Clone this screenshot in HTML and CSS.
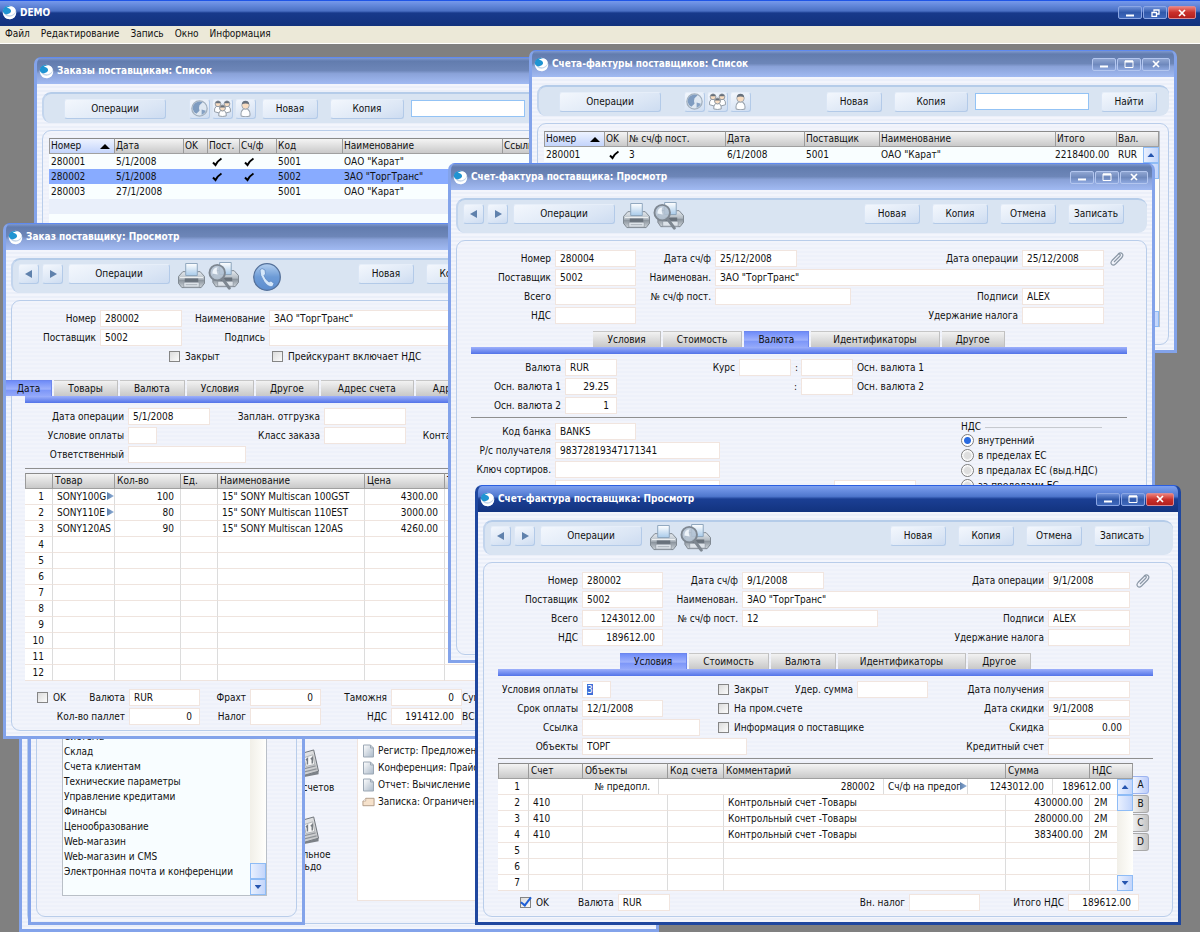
FILE: index.html
```
<!DOCTYPE html>
<html lang="ru">
<head>
    <meta charset="UTF-8">
    <meta name="viewport" content="width=device-width, initial-scale=1.0">
    <title>DEMO</title>
    <link rel="stylesheet" href="styles.css">
</head>
<body>
    <svg class="sprite">
        <defs>
            <linearGradient id="g-steel" x1="0" y1="0" x2="0" y2="1">
                <stop offset="0" stop-color="#e6ebf0"/>
                <stop offset="0.45" stop-color="#b4bcc4"/>
                <stop offset="0.55" stop-color="#8d969f"/>
                <stop offset="1" stop-color="#ccd3d9"/>
            </linearGradient>
            <linearGradient id="g-paper" x1="0" y1="0" x2="0" y2="1">
                <stop offset="0" stop-color="#ffffff"/>
                <stop offset="1" stop-color="#a9cbea"/>
            </linearGradient>
            <linearGradient id="g-phone" x1="0" y1="0" x2="0" y2="1">
                <stop offset="0" stop-color="#b4d0f0"/>
                <stop offset="0.5" stop-color="#6d9bd6"/>
                <stop offset="1" stop-color="#5c8dcf"/>
            </linearGradient>
            <linearGradient id="g-doc" x1="0" y1="0" x2="1" y2="1">
                <stop offset="0" stop-color="#ffffff"/>
                <stop offset="1" stop-color="#a9b8c8"/>
            </linearGradient>
            <linearGradient id="g-ledger" x1="0" y1="0" x2="1" y2="1">
                <stop offset="0" stop-color="#f4f4f4"/>
                <stop offset="1" stop-color="#bdbfc2"/>
            </linearGradient>
        </defs>
        <symbol id="logo" viewBox="0 0 16 16">
            <circle cx="8" cy="8" r="7.300" fill="#c4d6ea"/>
            <path d="M1 6Q2 12 8 12.500Q13 12.500 15 7Q15.500 14 9 15.200Q2 15.500 1 8Z" fill="#fff"/>
            <ellipse cx="6" cy="5.500" rx="5.200" ry="4.200" fill="#1f94d2" transform="rotate(-25 6 5.500)"/>
            <path d="M5 3Q11 0 14 4Q15.500 8 11 10.500Q7 12 5 9.500Q8 10 9.500 7.500Q10.500 4 5 3Z" fill="#fff"/>
        </symbol>
        <symbol id="min" viewBox="0 0 10 8"><path d="M1 6.500H9" stroke="#fff" stroke-width="2"/></symbol>
        <symbol id="max" viewBox="0 0 10 8"><path d="M1 1H9V7.500H1Z" fill="none" stroke="#fff"/><path d="M1 1.500H9" stroke="#fff" stroke-width="2"/></symbol>
        <symbol id="restore" viewBox="0 0 10 8"><path d="M4 2.500V1H9V5H7M2 3.500H6.500V7.500H2Z" fill="none" stroke="#fff" stroke-width="1.300"/></symbol>
        <symbol id="close" viewBox="0 0 10 8"><path d="M2 1L8 7M8 1L2 7" stroke="#fff" stroke-width="1.700"/></symbol>
        <symbol id="prev" viewBox="0 0 8 8"><path d="M7 0V8L0 4Z" fill="#5f81ac"/></symbol>
        <symbol id="next" viewBox="0 0 8 8"><path d="M1 0V8L8 4Z" fill="#5f81ac"/></symbol>
        <symbol id="tick" viewBox="0 0 10 10"><path d="M1 5.500L3.500 8Q5.500 4 9.500 1.500" fill="none" stroke="#000" stroke-width="2"/></symbol>
        <symbol id="printer" viewBox="0 0 28 28">
            <path d="M5 9H23L27.500 14V21L24 25.500H4L0.500 21V14Z" fill="url(#g-steel)" stroke="#7d868f"/>
            <path d="M8 0.500H20V13H8Z" fill="url(#g-paper)" stroke="#8ba3bb"/>
            <path d="M2 15H26" stroke="#eef1f4"/>
            <path d="M7 16H21V20H7Z" fill="#68717b"/>
            <path d="M6 20H22V25H6Z" fill="#dde3e9" stroke="#89929b" stroke-width="0.700"/>
            <path d="M8 22.500H20" stroke="#a7afb7"/>
        </symbol>
        <symbol id="preview" viewBox="0 0 32 30">
            <path d="M9 9H27L31.500 14V21L28 25.500H8L5 21V14Z" fill="url(#g-steel)" stroke="#7d868f"/>
            <path d="M12 0.500H24V13H12Z" fill="url(#g-paper)" stroke="#8ba3bb"/>
            <path d="M12 16H25V20H12Z" fill="#68717b"/>
            <path d="M10 20H26V25H10Z" fill="#dde3e9" stroke="#89929b" stroke-width="0.700"/>
            <circle cx="9.500" cy="11" r="8" fill="#b4c2d1" fill-opacity="0.850" stroke="#7e8791" stroke-width="2"/>
            <path d="M4.500 12Q4.500 6 10 5.500Q8 8 10 13Z" fill="#eef4fa"/>
            <path d="M15 17.500L22 27" stroke="#7e8791" stroke-width="3.200" stroke-linecap="round"/>
        </symbol>
        <symbol id="phone" viewBox="0 0 28 28">
            <circle cx="14" cy="14" r="13.300" fill="url(#g-phone)" stroke="#55719a" stroke-width="1.300"/>
            <path d="M9 5.500L12 7L12.500 11L11 12.500Q12.500 17 16 19L18 18L21 20.500L19.500 23.500Q15 24.500 11 18.500Q6.500 12 7 7Z" fill="#d5e7fa" stroke="#5a85c0" stroke-width="0.700"/>
        </symbol>
        <symbol id="globe" viewBox="0 0 16 16">
            <circle cx="8" cy="8" r="7.200" fill="#dfe8f2" stroke="#a3b0be" stroke-width="1.200"/>
            <path d="M1.500 8Q2 2 8 1.500L11 2L8 5Q7 8 8 10L5 13Q2 11.500 1.500 8Z" fill="#7f9cc0"/>
            <path d="M10 9L14 10Q13 13 10 14Z" fill="#86a1c3"/>
        </symbol>
        <symbol id="person" viewBox="0 0 16 16">
            <path d="M4 15Q3 11 6 8.500H10Q13 11 12 15Q8 16.500 4 15Z" fill="#fff" stroke="#9aa3ad"/>
            <circle cx="8" cy="5" r="3.500" fill="#f8dcc0" stroke="#9aa3ad" stroke-width="0.800"/>
            <path d="M4.500 4Q5 0.800 8 0.800Q11 0.800 11.500 4Q8 2.500 4.500 4Z" fill="#66707c"/>
        </symbol>
        <symbol id="group" viewBox="0 0 16 16">
            <path d="M0.500 11Q0 8 2 6H6L8 8L10 6H14Q16 8 15.500 11L12 12H4Z" fill="#fff" stroke="#8f98a3" stroke-width="0.900"/>
            <circle cx="3.800" cy="3.600" r="2.700" fill="#f8dcc0" stroke="#8f98a3" stroke-width="0.900"/>
            <circle cx="12.200" cy="3.600" r="2.700" fill="#f8dcc0" stroke="#8f98a3" stroke-width="0.900"/>
            <path d="M1.200 3Q3.800 -1 6.400 3ZM9.600 3Q12.200 -1 14.800 3Z" fill="#66707c"/>
            <path d="M4.500 15Q4 12 6 10H10Q12 12 11.500 15Q8 16 4.500 15Z" fill="#fff" stroke="#8f98a3" stroke-width="0.900"/>
            <circle cx="8" cy="7.500" r="2.800" fill="#f8dcc0" stroke="#8f98a3" stroke-width="0.900"/>
            <path d="M5.300 7Q8 3 10.700 7Z" fill="#66707c"/>
        </symbol>
        <symbol id="clip" viewBox="0 0 14 14">
            <path d="M4 10L9.500 4.500Q11 3 9.800 2.200Q9 1.500 7.500 3L2 8.500Q0 11 1.800 12.500Q3.500 13.800 5.500 12L11.500 6Q14 3 12 1.500Q10.500 0 8 2" fill="none" stroke="#8b98a6" stroke-width="1.200"/>
        </symbol>
        <symbol id="doc" viewBox="0 0 12 14"><path d="M1 1H8L11 4V13H1Z" fill="url(#g-doc)" stroke="#9ca8b5"/><path d="M8 1V4H11" fill="none" stroke="#9ca8b5"/></symbol>
        <symbol id="note" viewBox="0 0 14 10"><path d="M4 1H13V9H1V4Z" fill="#f6e2cc" stroke="#b09a86"/><path d="M4 1V4H1" fill="#fff" stroke="#b09a86" stroke-width="0.700"/></symbol>
        <symbol id="ledger" viewBox="0 0 30 30">
            <path d="M3 7L24 1L29 23L8 29Z" fill="url(#g-ledger)" stroke="#6d7278"/>
            <path d="M8 29L29 23V26L9 30Z" fill="#7c8187"/>
            <path d="M14 9L23 6L25 16L16 18Z" fill="#f6f6f6" stroke="#a3a6aa" stroke-width="0.800"/>
            <path d="M17.500 16V10L16 11.500M22.500 15V9L21 10.500" fill="none" stroke="#777c82" stroke-width="1.500"/>
            <path d="M8 22L26 17.500M9 25L27 20.500" stroke="#909499" stroke-width="1.200"/>
        </symbol>
    </svg>

    <div class="app">
        <header class="app-title">
            <svg class="logo"><use href="#logo"/></svg>
            <h1>DEMO</h1>
            <div class="win-buttons">
                <button aria-label="Свернуть"><svg><use href="#min"/></svg></button>
                <button aria-label="Восстановить"><svg><use href="#restore"/></svg></button>
                <button class="red" aria-label="Закрыть"><svg><use href="#close"/></svg></button>
            </div>
        </header>
        <nav class="menu">
            <a href="#">Файл</a>
            <a href="#">Редактирование</a>
            <a href="#">Запись</a>
            <a href="#">Окно</a>
            <a href="#">Информация</a>
        </nav>

        <main class="desktop">

            <!-- Главное окно -->
            <section class="window" id="win-main">
                <div class="title"><svg class="logo"><use href="#logo"/></svg></div>
                <div class="body">
                    <div class="panel shortcuts">
                        <div class="icons">
                            <a href="#"><svg><use href="#ledger"/></svg>План счетов</a>
                            <a href="#"><svg><use href="#ledger"/></svg>Начальное<br>сальдо</a>
                        </div>
                        <ul class="docs">
                            <li><svg><use href="#doc"/></svg>Регистр: Предложения</li>
                            <li><svg><use href="#doc"/></svg>Конференция: Прайс</li>
                            <li><svg><use href="#doc"/></svg>Отчет: Вычисление</li>
                            <li><svg><use href="#note"/></svg>Записка: Ограничения</li>
                        </ul>
                    </div>
                </div>
            </section>

            <!-- Модули -->
            <section class="window" id="win-modules">
                <div class="title"><svg class="logo"><use href="#logo"/></svg></div>
                <div class="body">
                    <div class="panel modules">
                        <div class="listbox">
                            <ul>
                                <li>Система</li>
                                <li>Склад</li>
                                <li>Счета клиентам</li>
                                <li>Технические параметры</li>
                                <li>Управление кредитами</li>
                                <li>Финансы</li>
                                <li>Ценообразование</li>
                                <li>Web-магазин</li>
                                <li>Web-магазин и CMS</li>
                                <li>Электронная почта и конференции</li>
                            </ul>
                            <div class="scroll">
                                <span class="track"></span>
                                <button class="thumb" aria-label="Ползунок"></button>
                                <button class="down" aria-label="Вниз"></button>
                            </div>
                        </div>
                    </div>
                </div>
            </section>

            <!-- Заказы поставщикам: Список -->
            <section class="window" id="win-orders">
                <div class="title"><svg class="logo"><use href="#logo"/></svg><h2>Заказы поставщикам: Список</h2></div>
                <div class="body">
                    <div class="toolbar list-bar">
                        <button class="btn ops">Операции</button>
                        <div class="icon-group">
                            <button class="btn icon" aria-label="Все"><svg><use href="#globe"/></svg></button>
                            <button class="btn icon" aria-label="Группа"><svg><use href="#group"/></svg></button>
                            <button class="btn icon" aria-label="Пользователь"><svg><use href="#person"/></svg></button>
                        </div>
                        <div class="actions">
                            <button class="btn">Новая</button>
                            <button class="btn wide">Копия</button>
                            <input class="search" type="text" aria-label="Поиск">
                            <button class="btn">Найти</button>
                        </div>
                    </div>
                    <div class="panel list-panel">
                        <table class="list">
                            <colgroup><col width="65"><col width="69"><col width="24"><col width="32"><col width="37"><col width="66"><col width="160"><col></colgroup>
                            <thead>
                                <tr><th class="sorted">Номер</th><th>Дата</th><th>OK</th><th>Пост.</th><th>Сч/ф</th><th>Код</th><th>Наименование</th><th>Ссылка</th></tr>
                            </thead>
                            <tbody>
                                <tr><td>280001</td><td>5/1/2008</td><td></td><td class="mark"><svg><use href="#tick"/></svg></td><td class="mark"><svg><use href="#tick"/></svg></td><td>5001</td><td>ОАО "Карат"</td><td></td></tr>
                                <tr class="selected"><td>280002</td><td>5/1/2008</td><td></td><td class="mark"><svg><use href="#tick"/></svg></td><td class="mark"><svg><use href="#tick"/></svg></td><td>5002</td><td>ЗАО "ТоргТранс"</td><td></td></tr>
                                <tr><td>280003</td><td>27/1/2008</td><td></td><td></td><td></td><td>5001</td><td>ОАО "Карат"</td><td></td></tr>
                                <tr><td colspan="8"></td></tr>
                                <tr><td colspan="8"></td></tr>
                                <tr><td colspan="8"></td></tr>
                            </tbody>
                        </table>
                    </div>
                </div>
            </section>

            <!-- Счета-фактуры поставщиков: Список -->
            <section class="window" id="win-invoices">
                <div class="title">
                    <svg class="logo"><use href="#logo"/></svg><h2>Счета-фактуры поставщиков: Список</h2>
                    <div class="win-buttons">
                        <button aria-label="Свернуть"><svg><use href="#min"/></svg></button>
                        <button aria-label="Развернуть"><svg><use href="#max"/></svg></button>
                        <button class="last" aria-label="Закрыть"><svg><use href="#close"/></svg></button>
                    </div>
                </div>
                <div class="body">
                    <div class="toolbar list-bar">
                        <button class="btn ops">Операции</button>
                        <div class="icon-group">
                            <button class="btn icon" aria-label="Все"><svg><use href="#globe"/></svg></button>
                            <button class="btn icon" aria-label="Группа"><svg><use href="#group"/></svg></button>
                            <button class="btn icon" aria-label="Пользователь"><svg><use href="#person"/></svg></button>
                        </div>
                        <div class="actions">
                            <button class="btn">Новая</button>
                            <button class="btn wide">Копия</button>
                            <input class="search" type="text" aria-label="Поиск">
                            <button class="btn">Найти</button>
                        </div>
                    </div>
                    <div class="panel list-panel">
                        <table class="list">
                            <colgroup><col width="60"><col width="23"><col width="98"><col width="79"><col width="75"><col><col width="61"><col width="27"><col width="16"></colgroup>
                            <thead>
                                <tr><th class="sorted">Номер</th><th>OK</th><th>№ сч/ф пост.</th><th>Дата</th><th>Поставщик</th><th>Наименование</th><th>Итого</th><th colspan="2">Вал.</th></tr>
                            </thead>
                            <tbody>
                                <tr><td>280001</td><td class="mark"><svg><use href="#tick"/></svg></td><td>3</td><td>6/1/2008</td><td>5001</td><td>ОАО "Карат"</td><td class="num">2218400.00</td><td>RUR</td>
                                    <td class="scroll-cell" rowspan="12">
                                        <div class="scroll">
                                            <button class="up" aria-label="Вверх"></button>
                                            <button class="thumb" aria-label="Ползунок"></button>
                                            <span class="track"></span>
                                            <button class="down" aria-label="Вниз"></button>
                                        </div>
                                    </td></tr>
                                <tr><td colspan="8"></td></tr>
                                <tr><td colspan="8"></td></tr>
                                <tr><td colspan="8"></td></tr>
                                <tr><td colspan="8"></td></tr>
                                <tr><td colspan="8"></td></tr>
                                <tr><td colspan="8"></td></tr>
                                <tr><td colspan="8"></td></tr>
                                <tr><td colspan="8"></td></tr>
                                <tr><td colspan="8"></td></tr>
                                <tr><td colspan="8"></td></tr>
                                <tr><td colspan="8"></td></tr>
                            </tbody>
                        </table>
                    </div>
                </div>
            </section>

            <!-- Заказ поставщику: Просмотр -->
            <section class="window" id="win-order">
                <div class="title"><svg class="logo"><use href="#logo"/></svg><h2>Заказ поставщику: Просмотр</h2></div>
                <div class="body">
                    <div class="toolbar view-bar">
                        <button class="btn icon" aria-label="Назад"><svg class="arrow"><use href="#prev"/></svg></button>
                        <button class="btn icon" aria-label="Вперед"><svg class="arrow"><use href="#next"/></svg></button>
                        <button class="btn ops">Операции</button>
                        <button class="pic" aria-label="Печать"><svg class="printer"><use href="#printer"/></svg></button>
                        <button class="pic" aria-label="Предпросмотр"><svg class="preview"><use href="#preview"/></svg></button>
                        <button class="pic call" aria-label="Позвонить"><svg class="phone"><use href="#phone"/></svg></button>
                        <div class="actions">
                            <button class="btn">Новая</button>
                            <button class="btn">Копия</button>
                            <button class="btn">Отмена</button>
                            <button class="btn">Записать</button>
                        </div>
                    </div>
                    <div class="panel form">
                        <div class="row">
                            <label class="w71" for="o-num">Номер</label><input class="w82" id="o-num" value="280002">
                            <label class="w79" for="o-name">Наименование</label><input class="grow" id="o-name" value='ЗАО "ТоргТранс"'>
                        </div>
                        <div class="row">
                            <label class="w71" for="o-sup">Поставщик</label><input class="w82" id="o-sup" value="5002">
                            <label class="w79" for="o-sign">Подпись</label><input class="grow" id="o-sign">
                        </div>
                        <div class="row order-flags">
                            <label class="check w99"><input type="checkbox">Закрыт</label>
                            <label class="check"><input type="checkbox">Прейскурант включает НДС</label>
                        </div>
                        <div class="tabs order-tabs">
                            <button class="active">Дата</button>
                            <button>Товары</button>
                            <button>Валюта</button>
                            <button>Условия</button>
                            <button>Другое</button>
                            <button class="roomy">Адрес счета</button>
                            <button class="roomy">Адрес</button>
                        </div>
                        <div class="row">
                            <label class="w99" for="o-date">Дата операции</label><input class="w82" id="o-date" value="5/1/2008">
                            <label class="w106" for="o-ship">Заплан. отгрузка</label><input class="w82" id="o-ship">
                        </div>
                        <div class="row">
                            <label class="w99" for="o-terms">Условие оплаты</label><input class="w29" id="o-terms">
                            <label class="w159" for="o-class">Класс заказа</label><input class="w82" id="o-class">
                            <label class="w52" for="o-contact">Контакт</label><input class="grow" id="o-contact">
                        </div>
                        <div class="row">
                            <label class="w99" for="o-resp">Ответственный</label><input class="w118" id="o-resp">
                        </div>
                        <hr>
                        <table class="grid">
                            <colgroup><col width="27"><col width="62"><col width="66"><col width="37"><col width="147"><col width="80"><col></colgroup>
                            <thead>
                                <tr><th></th><th>Товар</th><th>Кол-во</th><th>Ед.</th><th>Наименование</th><th>Цена</th><th>Т</th></tr>
                            </thead>
                            <tbody>
                                <tr><th>1</th><td class="more">SONY100G</td><td class="num">100</td><td></td><td>15" SONY Multiscan 100GST</td><td class="num">4300.00</td><td></td></tr>
                                <tr><th>2</th><td class="more">SONY110E</td><td class="num">80</td><td></td><td>15" SONY Multiscan 110EST</td><td class="num">3000.00</td><td></td></tr>
                                <tr><th>3</th><td>SONY120AS</td><td class="num">90</td><td></td><td>15" SONY Multiscan 120AS</td><td class="num">4260.00</td><td></td></tr>
                                <tr><th>4</th><td></td><td></td><td></td><td></td><td></td><td></td></tr>
                                <tr><th>5</th><td></td><td></td><td></td><td></td><td></td><td></td></tr>
                                <tr><th>6</th><td></td><td></td><td></td><td></td><td></td><td></td></tr>
                                <tr><th>7</th><td></td><td></td><td></td><td></td><td></td><td></td></tr>
                                <tr><th>8</th><td></td><td></td><td></td><td></td><td></td><td></td></tr>
                                <tr><th>9</th><td></td><td></td><td></td><td></td><td></td><td></td></tr>
                                <tr><th>10</th><td></td><td></td><td></td><td></td><td></td><td></td></tr>
                                <tr><th>11</th><td></td><td></td><td></td><td></td><td></td><td></td></tr>
                                <tr><th>12</th><td></td><td></td><td></td><td></td><td></td><td></td></tr>
                            </tbody>
                        </table>
                        <div class="order-totals">
                            <div class="row">
                                <label class="check lead"><input type="checkbox">OK</label>
                                <label class="grow-label" for="o-cur">Валюта</label><input class="w71" id="o-cur" value="RUR">
                                <label class="w42" for="o-freight">Фрахт</label><input class="w71 num" id="o-freight" value="0">
                                <label class="w62" for="o-customs">Таможня</label><input class="w71 num" id="o-customs" value="0">
                                <label class="tail" for="o-sum">Сумма</label><input class="w71" id="o-sum">
                            </div>
                            <div class="row">
                                <label class="grow-label" for="o-pallet">Кол-во паллет</label><input class="w71 num" id="o-pallet" value="0">
                                <label class="w42" for="o-tax">Налог</label><input class="w71" id="o-tax">
                                <label class="w62" for="o-vat">НДС</label><input class="w71 num" id="o-vat" value="191412.00">
                                <label class="tail" for="o-total">ВСЕГО</label><input class="w71" id="o-total">
                            </div>
                        </div>
                    </div>
                </div>
            </section>

            <!-- Счет-фактура 280004 -->
            <section class="window" id="win-bill">
                <div class="title">
                    <svg class="logo"><use href="#logo"/></svg><h2>Счет-фактура поставщика: Просмотр</h2>
                    <div class="win-buttons">
                        <button aria-label="Свернуть"><svg><use href="#min"/></svg></button>
                        <button aria-label="Развернуть"><svg><use href="#max"/></svg></button>
                        <button class="last" aria-label="Закрыть"><svg><use href="#close"/></svg></button>
                    </div>
                </div>
                <div class="body">
                    <div class="toolbar view-bar">
                        <button class="btn icon" aria-label="Назад"><svg class="arrow"><use href="#prev"/></svg></button>
                        <button class="btn icon" aria-label="Вперед"><svg class="arrow"><use href="#next"/></svg></button>
                        <button class="btn ops">Операции</button>
                        <button class="pic" aria-label="Печать"><svg class="printer"><use href="#printer"/></svg></button>
                        <button class="pic" aria-label="Предпросмотр"><svg class="preview"><use href="#preview"/></svg></button>
                        <div class="actions">
                            <button class="btn">Новая</button>
                            <button class="btn">Копия</button>
                            <button class="btn">Отмена</button>
                            <button class="btn">Записать</button>
                        </div>
                    </div>
                    <div class="panel form">
                        <div class="row">
                            <label class="w80" for="b-num">Номер</label><input class="w81" id="b-num" value="280004">
                            <label class="w71" for="b-date">Дата сч/ф</label><input class="w82" id="b-date" value="25/12/2008">
                            <label class="push" for="b-op">Дата операции</label><input class="w82" id="b-op" value="25/12/2008">
                            <svg class="clip"><use href="#clip"/></svg>
                        </div>
                        <div class="row short">
                            <label class="w80" for="b-sup">Поставщик</label><input class="w81" id="b-sup" value="5002">
                            <label class="w71" for="b-name">Наименован.</label><input class="grow" id="b-name" value='ЗАО "ТоргТранс"'>
                        </div>
                        <div class="row short">
                            <label class="w80" for="b-all">Всего</label><input class="w81" id="b-all">
                            <label class="w71" for="b-ref">№ сч/ф пост.</label><input class="w136" id="b-ref">
                            <label class="push" for="b-sign">Подписи</label><input class="w82" id="b-sign" value="ALEX">
                        </div>
                        <div class="row short">
                            <label class="w80" for="b-vat">НДС</label><input class="w81" id="b-vat">
                            <label class="push" for="b-hold">Удержание налога</label><input class="w82" id="b-hold">
                        </div>
                        <div class="tabs">
                            <button>Условия</button>
                            <button>Стоимость</button>
                            <button class="active">Валюта</button>
                            <button class="roomy">Идентификаторы</button>
                            <button>Другое</button>
                        </div>
                        <div class="row">
                            <label class="w90" for="b-cur">Валюта</label><input class="w52" id="b-cur" value="RUR">
                            <label class="w114" for="b-rate1">Курс</label><input class="w52" id="b-rate1"><span>:</span><input class="w52" id="b-rate2" aria-label="Курс к осн. валюте 1">
                            <label for="b-rate2">Осн. валюта 1</label>
                        </div>
                        <div class="row">
                            <label class="w90" for="b-base1">Осн. валюта 1</label><input class="w52 num" id="b-base1" value="29.25">
                            <label class="w176" for="b-rate3">:</label><input class="w52" id="b-rate3">
                            <label for="b-rate3">Осн. валюта 2</label>
                        </div>
                        <div class="row">
                            <label class="w90" for="b-base2">Осн. валюта 2</label><input class="w52 num" id="b-base2" value="1">
                        </div>
                        <hr>
                        <div class="bank">
                            <div class="bank-rows">
                                <div class="row">
                                    <label class="w80" for="b-bank">Код банка</label><input class="w81" id="b-bank" value="BANK5">
                                </div>
                                <div class="row">
                                    <label class="w80" for="b-acc">Р/с получателя</label><input class="w165" id="b-acc" value="98372819347171341">
                                </div>
                                <div class="row">
                                    <label class="w80" for="b-key">Ключ сортиров.</label><input class="w165" id="b-key">
                                </div>
                                <div class="row">
                                    <label class="w80" for="b-x1"></label><input class="w165" id="b-x1">
                                    <label class="w106" for="b-x2"></label><input class="w82" id="b-x2">
                                </div>
                            </div>
                            <fieldset>
                                <legend>НДС</legend>
                                <label><input type="radio" name="vat" checked>внутренний</label>
                                <label><input type="radio" name="vat">в пределах ЕС</label>
                                <label><input type="radio" name="vat">в предалах ЕС (выд.НДС)</label>
                                <label><input type="radio" name="vat">за пределами ЕС</label>
                            </fieldset>
                        </div>
                    </div>
                </div>
            </section>

            <!-- Счет-фактура 280002 -->
            <section class="window active" id="win-current">
                <div class="title">
                    <svg class="logo"><use href="#logo"/></svg><h2>Счет-фактура поставщика: Просмотр</h2>
                    <div class="win-buttons">
                        <button aria-label="Свернуть"><svg><use href="#min"/></svg></button>
                        <button aria-label="Развернуть"><svg><use href="#max"/></svg></button>
                        <button class="red" aria-label="Закрыть"><svg><use href="#close"/></svg></button>
                    </div>
                </div>
                <div class="body">
                    <div class="toolbar view-bar">
                        <button class="btn icon" aria-label="Назад"><svg class="arrow"><use href="#prev"/></svg></button>
                        <button class="btn icon" aria-label="Вперед"><svg class="arrow"><use href="#next"/></svg></button>
                        <button class="btn ops">Операции</button>
                        <button class="pic" aria-label="Печать"><svg class="printer"><use href="#printer"/></svg></button>
                        <button class="pic" aria-label="Предпросмотр"><svg class="preview"><use href="#preview"/></svg></button>
                        <div class="actions">
                            <button class="btn">Новая</button>
                            <button class="btn">Копия</button>
                            <button class="btn">Отмена</button>
                            <button class="btn">Записать</button>
                        </div>
                    </div>
                    <div class="panel form">
                        <div class="row">
                            <label class="w80" for="c-num">Номер</label><input class="w81" id="c-num" value="280002">
                            <label class="w71" for="c-date">Дата сч/ф</label><input class="w82" id="c-date" value="9/1/2008">
                            <label class="push" for="c-op">Дата операции</label><input class="w82" id="c-op" value="9/1/2008">
                            <svg class="clip"><use href="#clip"/></svg>
                        </div>
                        <div class="row short">
                            <label class="w80" for="c-sup">Поставщик</label><input class="w81" id="c-sup" value="5002">
                            <label class="w71" for="c-name">Наименован.</label><input class="grow" id="c-name" value='ЗАО "ТоргТранс"'>
                        </div>
                        <div class="row short">
                            <label class="w80" for="c-all">Всего</label><input class="w81 num" id="c-all" value="1243012.00">
                            <label class="w71" for="c-ref">№ сч/ф пост.</label><input class="w136" id="c-ref" value="12">
                            <label class="push" for="c-sign">Подписи</label><input class="w82" id="c-sign" value="ALEX">
                        </div>
                        <div class="row short">
                            <label class="w80" for="c-vat">НДС</label><input class="w81 num" id="c-vat" value="189612.00">
                            <label class="push" for="c-hold">Удержание налога</label><input class="w82" id="c-hold">
                        </div>
                        <div class="tabs">
                            <button class="active">Условия</button>
                            <button>Стоимость</button>
                            <button>Валюта</button>
                            <button class="roomy">Идентификаторы</button>
                            <button>Другое</button>
                        </div>
                        <div class="row short">
                            <div class="lead-field"><label class="w80" for="c-terms">Условия оплаты</label><input class="w29" id="c-terms" value="3"></div>
                            <label class="check w71"><input type="checkbox">Закрыт</label>
                            <label class="w60" for="c-hsum">Удер. сумма</label><input class="w71" id="c-hsum">
                            <label class="push" for="c-recv">Дата получения</label><input class="w82" id="c-recv">
                        </div>
                        <div class="row short">
                            <div class="lead-field"><label class="w80" for="c-due">Срок оплаты</label><input class="w81" id="c-due" value="12/1/2008"></div>
                            <label class="check"><input type="checkbox">На пром.счете</label>
                            <label class="push" for="c-ddate">Дата скидки</label><input class="w82" id="c-ddate" value="9/1/2008">
                        </div>
                        <div class="row short">
                            <div class="lead-field"><label class="w80" for="c-link">Ссылка</label><input class="w118" id="c-link"></div>
                            <label class="check"><input type="checkbox">Информация о поставщике</label>
                            <label class="push" for="c-disc">Скидка</label><input class="w82 num" id="c-disc" value="0.00">
                        </div>
                        <div class="row short">
                            <label class="w80" for="c-obj">Объекты</label><input class="w165" id="c-obj" value="ТОРГ">
                            <label class="push" for="c-cred">Кредитный счет</label><input class="w82" id="c-cred">
                        </div>
                        <hr>
                        <div class="grid-area">
                            <table class="grid">
                                <colgroup><col width="30"><col width="54"><col width="85"><col width="56"><col><col width="84"><col width="28"><col width="16"></colgroup>
                                <thead>
                                    <tr><th></th><th>Счет</th><th>Объекты</th><th>Код счета</th><th>Комментарий</th><th>Сумма</th><th colspan="2">НДС</th></tr>
                                </thead>
                                <tbody>
                                    <tr><th>1</th>
                                        <td class="prepay" colspan="6">
                                            <div class="prepay-row">
                                                <span class="p-title">№ предопл.</span>
                                                <span class="p-num">280002</span>
                                                <span class="p-text more">Сч/ф на предог</span>
                                                <span class="p-sum">1243012.00</span>
                                                <span class="p-vat">189612.00</span>
                                            </div>
                                        </td>
                                        <td class="scroll-cell" rowspan="7">
                                            <div class="scroll">
                                                <button class="up" aria-label="Вверх"></button>
                                                <button class="thumb" aria-label="Ползунок"></button>
                                                <span class="track"></span>
                                                <button class="down" aria-label="Вниз"></button>
                                            </div>
                                        </td></tr>
                                    <tr><th>2</th><td>410</td><td></td><td></td><td>Контрольный счет -Товары</td><td class="num">430000.00</td><td>2М</td></tr>
                                    <tr><th>3</th><td>410</td><td></td><td></td><td>Контрольный счет -Товары</td><td class="num">280000.00</td><td>2М</td></tr>
                                    <tr><th>4</th><td>410</td><td></td><td></td><td>Контрольный счет -Товары</td><td class="num">383400.00</td><td>2М</td></tr>
                                    <tr><th>5</th><td></td><td></td><td></td><td></td><td></td><td></td></tr>
                                    <tr><th>6</th><td></td><td></td><td></td><td></td><td></td><td></td></tr>
                                    <tr><th>7</th><td></td><td></td><td></td><td></td><td></td><td></td></tr>
                                </tbody>
                            </table>
                            <div class="side-tabs">
                                <button class="active">A</button>
                                <button>B</button>
                                <button>C</button>
                                <button>D</button>
                            </div>
                        </div>
                        <div class="row totals">
                            <label class="check lead"><input type="checkbox" checked>OK</label>
                            <label for="c-cur">Валюта</label><input class="w52" id="c-cur" value="RUR">
                            <label class="push" for="c-int">Вн. налог</label><input class="w71" id="c-int">
                            <label class="w80" for="c-tvat">Итого НДС</label><input class="w71 num" id="c-tvat" value="189612.00">
                        </div>
                    </div>
                </div>
            </section>
        </main>
    </div>
    <script>
        // Курсор ввода стоит в поле условий оплаты
        var terms = document.getElementById('c-terms');
        terms.focus();
        terms.select();
    </script>
</body>
</html>
```
FILE: styles.css
```
* {
    box-sizing: border-box;
}
body {
    margin: 0;
    font-family: "DejaVu Sans Condensed", "DejaVu Sans", sans-serif;
    font-size: 10px;
    line-height: 12px;
    color: #111;
    cursor: default;
}
button, input {
    font: inherit;
    color: inherit;
    outline: none;
}
button {
    padding: 0;
    border: 0;
    background: none;
}
ul {
    list-style: none;
    margin: 0;
    padding: 0;
}
a {
    color: inherit;
    text-decoration: none;
}
h1, h2 {
    margin: 0;
    font-size: 10px;
    font-weight: bold;
    color: #fff;
}
.sprite {
    position: absolute;
    width: 0;
    height: 0;
}
.app {
    display: flex;
    flex-direction: column;
    height: 100vh;
}

/* Заголовок программы и меню */
.app-title {
    display: flex;
    align-items: center;
    height: 26px;
    padding: 0 4px 2px 2px;
    border-top: 1px solid #1f55e6;
    background: linear-gradient(#7699ec, #4a70c4 40%, #17398b 48%, #12327d);
}
.logo {
    width: 15px;
    height: 15px;
    margin-right: 3px;
}
.menu {
    display: flex;
    align-items: center;
    gap: 11px;
    height: 18px;
    padding: 0 5px 2px;
    border-bottom: 1px solid #fff;
    background: #ece9d8;
}
.desktop {
    position: relative;
    flex: 1;
    overflow: hidden;
    background: #808080;
}

/* Окна */
.window {
    position: absolute;
    display: flex;
    flex-direction: column;
    border: 3px solid #83a3ea;
    border-top: 1px solid #5f8af0;
    border-radius: 7px 7px 0 0;
    background: #83a3ea;
    overflow: hidden;
}
.window.active {
    border-color: #1f479f;
    border-top-color: #2b5fe0;
    background: #1f479f;
}
.title {
    display: flex;
    align-items: center;
    flex: none;
    height: 26px;
    padding: 0 2px 0 2px;
    background: linear-gradient(#7d98cf, #627cae 12%, #6d86b8 48%, #8aa2d8 60%, #a1baf2);
}
.active > .title {
    background: linear-gradient(#7ea0f0, #4f77cd 40%, #1b3f94 50%, #12337f);
}
.win-buttons {
    display: flex;
    gap: 1px;
    margin-left: auto;
}
.win-buttons button {
    display: flex;
    align-items: center;
    justify-content: center;
    width: 24px;
    height: 13px;
    border: 1px solid #b3c6ef;
    border-radius: 2px;
    background: linear-gradient(#90a6d2, #6f89bd 50%, #8ea8df);
}
.win-buttons .last, .win-buttons .red {
    width: 28px;
}
.win-buttons svg {
    width: 10px;
    height: 8px;
}
.active .win-buttons button, .app-title .win-buttons button {
    border-color: #8ba6e4;
    background: linear-gradient(#6d8fd8, #3159ab 50%, #3f68bb);
}
.active .win-buttons .red, .app-title .win-buttons .red {
    border-color: #d98a94;
    background: linear-gradient(#ec7f78, #c9302b 50%, #b3201f);
}
.title .win-buttons {
    margin-right: 2px;
}
.body {
    display: flex;
    flex-direction: column;
    flex: 1;
    padding: 8px 5px 5px;
    background: repeating-linear-gradient(#f3f5fc 0 2px, #ebeff9 2px 4px);
}
.toolbar {
    display: flex;
    align-items: center;
    flex: none;
    border-top: 2px solid #b5cce9;
    border-left: 2px solid #c3d5ed;
    border-radius: 9px;
    background: #d9e4f2;
}
.list-bar {
    height: 31px;
    padding: 0 12px 0 20px;
}
.view-bar {
    height: 35px;
    padding: 0 23px 0 5px;
    gap: 3px;
}
.panel {
    flex: 1;
    margin-top: 7px;
    border: 1px solid #b9cdea;
    border-radius: 9px;
    background: repeating-linear-gradient(#f2f4fb 0 2px, #eef1fa 2px 4px);
}
.btn {
    flex: none;
    width: 56px;
    height: 20px;
    border: 1px solid;
    border-color: #e6eef9 #b3cae8 #b3cae8 #dbe6f5;
    border-radius: 3px;
    background: linear-gradient(160deg, #f3f7fd, #dbe6f5 70%, #cddcf1);
}
.btn.ops {
    width: 102px;
}
.btn.wide {
    width: 74px;
}
.btn.icon {
    display: flex;
    align-items: center;
    justify-content: center;
    width: 21px;
}
.btn.icon svg {
    width: 17px;
    height: 17px;
}
.btn.icon .arrow {
    width: 8px;
    height: 8px;
}
.icon-group {
    display: flex;
    gap: 2px;
    margin-left: 23px;
}
.actions {
    display: flex;
    align-items: center;
    gap: 12px;
    margin-left: auto;
}
.search {
    width: 114px;
    height: 17px;
    margin-left: -5px;
    border: 1px solid #93c3f5;
    background: #fff;
}
.view-bar .btn {
    margin-bottom: 5px;
}
.view-bar .ops {
    margin: 0 5px 5px 2px;
}
.pic svg {
    display: block;
    width: 27px;
    height: 27px;
}
.pic .preview {
    width: 31px;
    height: 29px;
}
.pic.call {
    margin-left: 11px;
}
.pic .phone {
    width: 28px;
    height: 28px;
}

/* Положение окон на рабочем столе */
#win-main {
    left: 19px;
    top: 516px;
    width: 640px;
    height: 372px;
}
#win-modules {
    left: 28px;
    top: 536px;
    width: 277px;
    height: 345px;
}
#win-orders {
    left: 34px;
    top: 13px;
    width: 579px;
}
#win-invoices {
    left: 529px;
    top: 6px;
    width: 648px;
}
#win-order {
    left: 3px;
    top: 179px;
    width: 646px;
}
#win-bill {
    left: 448px;
    top: 119px;
    width: 707px;
    height: 500px;
}
#win-current {
    left: 475px;
    top: 441px;
    width: 706px;
}

/* Главное окно */
.shortcuts {
    display: flex;
    align-items: flex-end;
    gap: 2px;
    padding: 0 9px 22px 227px;
}
.icons {
    width: 100px;
    padding-bottom: 28px;
    text-align: center;
}
.icons a {
    display: block;
    margin-top: 22px;
}
.icons svg {
    display: block;
    width: 30px;
    height: 29px;
    margin: 0 auto 4px;
}
.docs {
    flex: 1;
    height: 164px;
    padding: 4px;
    border: 1px solid #f0e4de;
    background: #fff;
}
.docs li {
    display: flex;
    align-items: center;
    gap: 3px;
    height: 17px;
    white-space: nowrap;
}
.docs svg {
    flex: none;
    width: 13px;
    height: 14px;
}
.modules {
    display: flex;
    align-items: flex-end;
    padding: 0 29px 20px 25px;
}
.listbox {
    display: flex;
    flex: 1;
    border: 1px solid #b9bfc7;
    background: #f8fdff;
}
.listbox ul {
    flex: 1;
    padding: 0 1px 16px;
}
.listbox li {
    height: 15px;
    line-height: 15px;
    white-space: nowrap;
}

/* Полоса прокрутки */
.scroll {
    display: flex;
    flex-direction: column;
    width: 16px;
    height: 100%;
    background: linear-gradient(90deg, #f1efe8, #fffffc);
}
.listbox .scroll {
    height: auto;
}
.scroll .track {
    flex: 1;
}
.scroll button {
    display: flex;
    align-items: center;
    justify-content: center;
    height: 16px;
    border: 1px solid #8ebcf6;
    background: linear-gradient(90deg, #e9f0fe, #c2d5fb);
}
.scroll .up::before, .scroll .down::before {
    content: "";
    width: 7px;
    height: 4px;
    background: #2656b0;
    clip-path: polygon(50% 0, 100% 100%, 0 100%);
}
.scroll .down::before {
    clip-path: polygon(0 0, 100% 0, 50% 100%);
}

/* Таблицы */
table {
    width: 100%;
    table-layout: fixed;
    border-collapse: separate;
    border-spacing: 0;
}
th, td {
    padding: 0 2px;
    text-align: left;
    font-weight: normal;
    white-space: nowrap;
    overflow: hidden;
}
thead th {
    height: 16px;
    border-top: 1px solid #8a8a8a;
    border-left: 1px solid #9a9a9a;
    border-bottom: 1px solid #a0a0a0;
    background: linear-gradient(#f4f4f4, #c9c9c9);
}
thead th:last-child {
    border-right: 1px solid #9a9a9a;
}
.list-panel {
    padding: 7px 8px 17px 6px;
}
.list {
    border-right: 1px solid #b9bfc7;
}
.list thead th {
    padding: 0 1px;
}
.list .sorted {
    background: linear-gradient(#eef3ff, #c3d4fb);
}
.sorted::after {
    content: "";
    float: right;
    width: 10px;
    height: 5px;
    margin: 4px 3px 0 0;
    background: #000;
    clip-path: polygon(50% 0, 100% 100%, 0 100%);
}
.list tbody td {
    height: 15px;
    background: #f9feff;
}
.list tbody tr:nth-child(even) td {
    background: #e9effa;
}
.list .selected td, .list tbody .selected:nth-child(even) td {
    background: #88abff;
}
.num {
    text-align: right;
}
.mark svg {
    display: block;
    width: 10px;
    height: 10px;
    margin: 0 0 0 3px;
}
.list tbody .scroll-cell, .grid tbody .scroll-cell {
    height: 1px;
    padding: 0;
    border: 0;
    background: none;
}
.list tbody .num {
    padding: 0 7px 0 0;
}
.grid thead th {
    padding: 0 2px;
}
.grid tbody th, .grid tbody td {
    height: 16px;
    border-bottom: 1px solid #efe4de;
    border-left: 1px solid #dcdcdc;
    background: #fff;
}
.grid tbody th {
    padding-right: 8px;
    border-left: 0;
    text-align: right;
}
.grid tbody td {
    padding: 0 4px;
}
.grid tbody .num {
    padding-right: 6px;
}
.more {
    position: relative;
}
.more::after {
    content: "";
    position: absolute;
    right: 0;
    top: 3px;
    width: 7px;
    height: 8px;
    background: linear-gradient(90deg, #5f81ac, #8fb0da);
    clip-path: polygon(0 0, 100% 50%, 0 100%);
}
.grid tbody .prepay {
    padding: 0;
}
.prepay-row {
    display: flex;
    text-align: right;
}
.prepay-row span {
    height: 15px;
    line-height: 15px;
    padding-right: 8px;
    border-right: 1px solid #dcdcdc;
    overflow: hidden;
}
.p-title {
    width: 130px;
}
.p-num {
    flex: 1;
}
.prepay-row .p-text {
    width: 84px;
    padding: 0 2px 0 4px;
    text-align: left;
}
.p-sum {
    width: 85px;
}
.prepay-row .p-vat {
    width: 64px;
    padding-right: 6px;
    border: 0;
}
.grid-area {
    display: flex;
    align-items: flex-start;
}
.grid-area .grid {
    flex: 1;
}
.side-tabs {
    display: flex;
    flex-direction: column;
    gap: 1px;
    width: 20px;
    padding: 13px 4px 0 0;
}
.side-tabs button {
    height: 18px;
    border: 1px solid #a9a9a9;
    border-left: 0;
    border-radius: 0 3px 3px 0;
    background: linear-gradient(90deg, #f0f0f0, #c4c4c4);
}
.side-tabs .active {
    border-color: #9db4f0;
    background: linear-gradient(90deg, #f1f5ff, #bccdfb);
}

/* Формы */
.form {
    padding: 9px 19px 3px 14px;
}
#win-order .form {
    padding-left: 13px;
}
.row, .lead-field {
    display: flex;
    align-items: center;
    gap: 4px;
    height: 17px;
    white-space: nowrap;
}
.row {
    margin-bottom: 2px;
}
.short {
    padding-right: 23px;
}
.row label {
    flex: none;
    text-align: right;
}
.row input {
    flex: none;
    height: 17px;
    padding: 0 4px;
    border: 1px solid #f1e5df;
    background: #fff;
}
.row .num {
    padding-right: 7px;
    text-align: right;
}
.row .push {
    margin-left: auto;
}
.row .grow {
    flex: 1;
    min-width: 0;
}
.row span {
    width: 2px;
}
.clip {
    width: 14px;
    height: 14px;
    margin: 0 3px 0 2px;
}
.lead-field {
    width: 216px;
}
.row .w29 { width: 29px; }
.row .w42 { width: 42px; }
.row .w52 { width: 52px; }
.row .w60 { width: 60px; }
.row .w62 { width: 62px; }
.row .w71 { width: 71px; }
.row .w79 { width: 79px; }
.row .w80 { width: 80px; }
.row .w81 { width: 81px; }
.row .w82 { width: 82px; }
.row .w90 { width: 90px; }
.row .w99 { width: 99px; }
.row .w106 { width: 106px; }
.row .w114 { width: 114px; }
.row .w118 { width: 118px; }
.row .w136 { width: 136px; }
.row .w159 { width: 159px; }
.row .w165 { width: 165px; }
.row .w176 { width: 176px; }
.row .check {
    display: flex;
    align-items: center;
    gap: 5px;
    text-align: left;
}
.row .check input {
    position: relative;
    appearance: none;
    width: 11px;
    height: 11px;
    margin: 0;
    padding: 0;
    border: 1px solid #858585;
    background: linear-gradient(135deg, #dcdcdc, #fbfbfb);
}
.check input:checked::before {
    content: "";
    position: absolute;
    left: 2px;
    top: -3px;
    width: 4px;
    height: 9px;
    border: solid #1f5fd6;
    border-width: 0 2px 2px 0;
    transform: rotate(38deg);
}
.tabs {
    display: flex;
    justify-content: center;
    gap: 2px;
    margin: 7px 0 5px;
    padding-bottom: 7px;
    background: linear-gradient(#9db0fb, #5273e8) bottom / 100% 7px no-repeat;
}
.tabs button {
    flex: none;
    height: 16px;
    padding: 1px 14px 0;
    border-top: 1px solid #c6c6c6;
    border-right: 1px solid #c0c0c0;
    background: linear-gradient(#f2f2f2, #c8c8c8);
}
.tabs .roomy {
    padding: 1px 22px 0;
}
.tabs .active {
    border-color: #6c86ee;
    background: linear-gradient(#6f8cf8, #9fb2fc 55%, #7c96f8 60%, #93a8fa);
}
.form .order-tabs {
    justify-content: flex-start;
    margin-top: 15px;
}
.order-tabs button {
    padding: 1px 14px 0;
}
.order-tabs .roomy {
    padding: 1px 17px 0;
}
.order-tabs button:first-child {
    margin-left: -19px;
    padding: 1px 11px 0;
}
.order-flags {
    padding-left: 144px;
}
hr {
    height: 1px;
    margin: 3px 0 4px;
    border: 0;
    background: #8f8f8f;
}
#win-order hr {
    margin-top: 5px;
}
#win-bill hr {
    margin-bottom: 5px;
}
.row .lead {
    padding-left: 12px;
}
.row .grow-label {
    flex: 1;
}
.order-totals {
    width: 437px;
    margin-top: 8px;
}
.order-totals .row {
    justify-content: flex-end;
}
.row .tail {
    width: 0;
    margin-left: -4px;
    text-align: left;
    overflow: visible;
}
.order-totals .tail + input {
    display: none;
}
.totals {
    margin-top: 3px;
    padding-right: 14px;
}
.row.totals {
    padding-left: 10px;
}
.totals .lead {
    margin-right: 25px;
}
.bank {
    display: flex;
    justify-content: space-between;
    padding-right: 25px;
}
fieldset {
    width: 141px;
    margin: -2px 0 0;
    padding: 0;
    border: 0;
    white-space: nowrap;
}
legend {
    display: flex;
    align-items: center;
    gap: 4px;
    width: 100%;
    padding: 0;
}
legend::after {
    content: "";
    flex: 1;
    height: 1px;
    background: #c6c9cf;
}
fieldset label {
    display: flex;
    align-items: center;
    gap: 4px;
    height: 15px;
}
fieldset input {
    appearance: none;
    width: 13px;
    height: 13px;
    margin: 0;
    border: 1px solid #7d7d7d;
    border-radius: 50%;
    background: radial-gradient(#dedede 0 3px, #fff 5px);
}
fieldset input:checked {
    background: radial-gradient(#2a6be0 0 3px, #fff 4px);
}
::selection {
    color: #fff;
    background: #3f6fd8;
}
```
